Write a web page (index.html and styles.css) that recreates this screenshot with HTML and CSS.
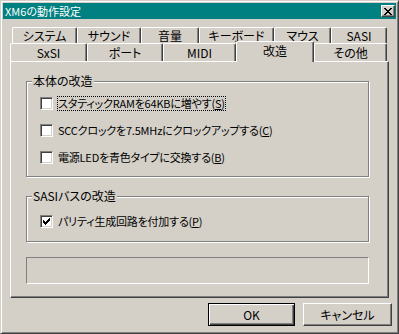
FILE: index.html
```html
<!DOCTYPE html>
<html lang="ja">
<head>
    <meta charset="UTF-8">
    <title>XM6の動作設定</title>
    <link rel="stylesheet" href="styles.css">
</head>
<body>
    <div class="window">
        <div class="titlebar">
            <span class="title">XM6の動作設定</span>
            <span class="close-btn">
                <svg width="8" height="7" viewBox="0 0 8 7"><path d="M0 0h2v1h-2zM6 0h2v1h-2zM1 1h2v1h-2zM5 1h2v1h-2zM2 2h4v1h-4zM3 3h2v1h-2zM2 4h4v1h-4zM1 5h2v1h-2zM5 5h2v1h-2zM0 6h2v1h-2zM6 6h2v1h-2z" fill="#000"/></svg>
            </span>
        </div>

        <div class="dialog">
            <div class="tabs">
                <div class="tab-row back">
                    <div class="tab tab-system">システム</div>
                    <div class="tab tab-sound">サウンド</div>
                    <div class="tab tab-volume">音量</div>
                    <div class="tab tab-keyboard">キーボード</div>
                    <div class="tab tab-mouse">マウス</div>
                    <div class="tab tab-sasi">SASI</div>
                </div>
                <div class="tab-row front">
                    <div class="tab tab-sxsi">SxSI</div>
                    <div class="tab tab-port">ポート</div>
                    <div class="tab tab-midi">MIDI</div>
                    <div class="tab tab-alter active">改造</div>
                    <div class="tab tab-misc">その他</div>
                </div>
            </div>

            <div class="panel">
                <div class="group group-main">
                    <span class="group-label">本体の改造</span>
                    <div class="check-row">
                        <span class="check"></span>
                        <span class="check-text focused">スタティックRAMを64KBに増やす(<u>S</u>)</span>
                    </div>
                    <div class="check-row">
                        <span class="check"></span>
                        <span class="check-text">SCCクロックを7.5MHzにクロックアップする(<u>C</u>)</span>
                    </div>
                    <div class="check-row">
                        <span class="check"></span>
                        <span class="check-text">電源LEDを青色タイプに交換する(<u>B</u>)</span>
                    </div>
                </div>

                <div class="group group-sasi">
                    <span class="group-label">SASIバスの改造</span>
                    <div class="check-row">
                        <span class="check checked">
                            <svg width="7" height="7" viewBox="0 0 7 7"><path d="M6 0h1v1h-1zM5 1h2v1h-2zM0 2h1v1h-1zM4 2h3v1h-3zM0 3h2v1h-2zM3 3h3v1h-3zM0 4h5v1h-5zM1 5h3v1h-3zM2 6h1v1h-1z" fill="#000"/></svg>
                        </span>
                        <span class="check-text">パリティ生成回路を付加する(<u>P</u>)</span>
                    </div>
                </div>

                <div class="status"></div>
            </div>

            <div class="buttons">
                <button class="btn btn-ok default">OK</button>
                <button class="btn btn-cancel">キャンセル</button>
            </div>
        </div>
    </div>
</body>
</html>
```

FILE: styles.css
```css
body {
    margin: 0;
    padding: 0;
    background: #d4d0c8;
    font-family: "Noto Sans CJK JP", "Noto Sans", sans-serif;
    font-size: 12px;
    font-feature-settings: "palt";
    color: #000;
}

.window {
    width: 399px;
    height: 334px;
    box-sizing: border-box;
    background: #d4d0c8;
    border: 1px solid;
    border-color: #d4d0c8 #404040 #404040 #d4d0c8;
    box-shadow: inset 1px 1px #fff, inset -1px -1px #808080;
    padding: 2px;
    display: flex;
    flex-direction: column;
}

.titlebar {
    height: 16px;
    background: #008080;
    color: #fff;
    display: flex;
    align-items: center;
    justify-content: space-between;
    padding: 0 1px 0 2px;
    line-height: 16px;
    font-size: 11px;
}

.close-btn {
    width: 14px;
    height: 12px;
    box-sizing: border-box;
    background: #d4d0c8;
    border: 1px solid;
    border-color: #fff #404040 #404040 #fff;
    box-shadow: inset -1px -1px #808080;
    display: flex;
    align-items: center;
    justify-content: center;
}

.close-btn svg {
    display: block;
}

.dialog {
    padding: 8px 7px 0;
}

/* tabs */
.tab-row {
    display: flex;
}

.tab-row.back {
    height: 16px;
    padding-left: 2px;
}

.tab-row.front {
    height: 18px;
}

.tab {
    box-sizing: border-box;
    height: 100%;
    border-top: 1px solid #fff;
    border-left: 1px solid #fff;
    border-right: 1px solid #404040;
    box-shadow: inset -1px 0 #808080;
    border-radius: 2px 2px 0 0;
    text-align: center;
    line-height: 15px;
    background: #d4d0c8;
}

.tab-row.front .tab {
    line-height: 17px;
}

.tab-system { width: 65px; }
.tab-sound { width: 64px; }
.tab-volume { width: 58px; }
.tab-keyboard { width: 75px; }
.tab-mouse { width: 57px; }
.tab-sasi { width: 56px; }

.tab-sxsi { width: 77px; }
.tab-port { width: 76px; }
.tab-midi { width: 73px; }
.tab-alter { width: 78px; }
.tab-misc { width: 73px; }

.tab-row.front .tab.active {
    height: 21px;
    margin-top: -2px;
    line-height: 18px;
    position: relative;
    z-index: 1;
}

/* page */
.panel {
    height: 237px;
    box-sizing: border-box;
    border: 1px solid;
    border-color: #fff #404040 #404040 #fff;
    box-shadow: inset -1px -1px #808080;
    padding: 19px 0 0 15px;
    display: flex;
    flex-direction: column;
}

.group {
    position: relative;
    width: 343px;
    box-sizing: border-box;
    border: 1px solid #808080;
    box-shadow: 1px 1px #fff, inset 1px 1px #fff;
    display: flex;
    flex-direction: column;
    gap: 12px;
    padding-left: 13px;
}

.group-main {
    height: 96px;
    padding-top: 14px;
}

.group-sasi {
    height: 46px;
    margin-top: 19px;
    padding-top: 17px;
}

.group-label {
    position: absolute;
    top: -8px;
    left: 5px;
    padding: 0 1px;
    line-height: 14px;
    background: #d4d0c8;
}

.check-row {
    height: 15px;
    display: flex;
    align-items: center;
}

.check {
    width: 13px;
    height: 13px;
    flex: none;
    box-sizing: border-box;
    border: 1px solid;
    border-color: #808080 #fff #fff #808080;
    box-shadow: inset 1px 1px #404040, inset -1px -1px #d4d0c8;
    background: #fff;
    margin-right: 4px;
    display: flex;
    align-items: center;
    justify-content: center;
}

.check svg {
    display: block;
}

.check-text {
    border: 1px dotted transparent;
    font-size: 11px;
    letter-spacing: -0.2px;
    line-height: 13px;
    white-space: nowrap;
}

.check-text.focused {
    border-color: #000;
}

.status {
    width: 343px;
    height: 27px;
    box-sizing: border-box;
    margin-top: 15px;
    border: 1px solid;
    border-color: #808080 #fff #fff #808080;
}

/* buttons */
.buttons {
    display: flex;
    justify-content: flex-end;
    gap: 8px;
    margin-top: 5px;
    margin-right: -3px;
}

.btn {
    height: 23px;
    padding: 0;
    box-sizing: border-box;
    background: #d4d0c8;
    border: 1px solid;
    border-color: #fff #404040 #404040 #fff;
    box-shadow: inset -1px -1px #808080;
    font: inherit;
    color: #000;
}

.btn-ok { width: 87px; }
.btn-cancel { width: 89px; }

.btn.default {
    border-color: #000;
    box-shadow: inset 1px 1px #fff, inset -1px -1px #404040, inset -2px -2px #808080;
}
```
